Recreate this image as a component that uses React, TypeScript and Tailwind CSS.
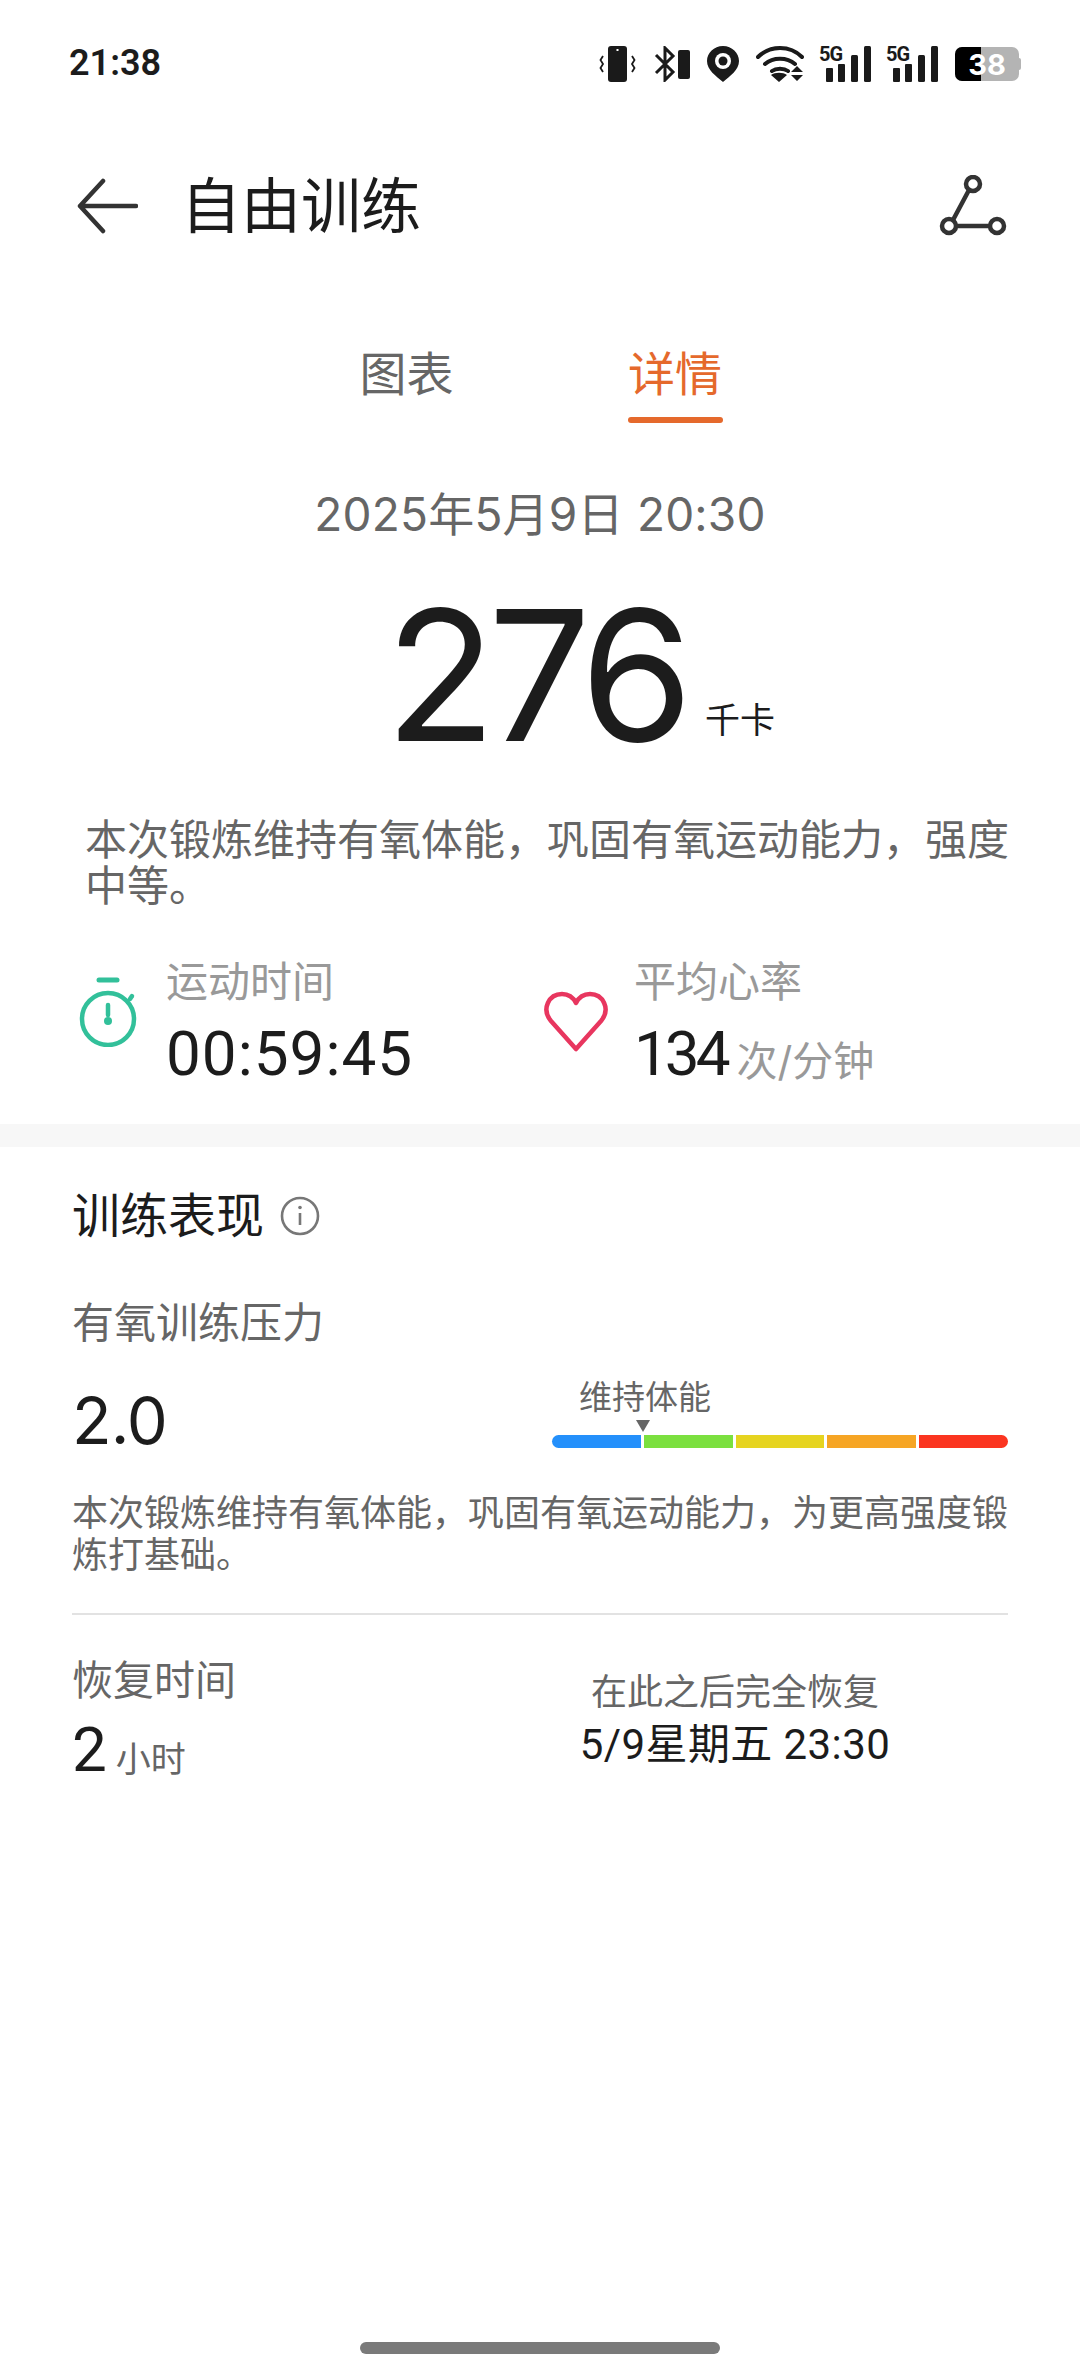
const FONT = "font-['Inter','Noto_Sans_CJK_SC',sans-serif]";
const NUM = "font-['Roboto','Noto_Sans_CJK_SC',sans-serif]";
const COMMA = "\uFF0C";

function SignalIcon() {
  return (
    <div className="relative h-[36px] w-[52px]">
      <span className="absolute left-0 top-[-2px] font-['Roboto'] text-[20px] font-bold leading-none tracking-[-1px] text-[#1a1a1a]">5G</span>
      <svg width="52" height="36" viewBox="0 0 52 36" className="absolute left-0 top-0">
        <rect x="7" y="22" width="7" height="14" rx="1" fill="#1a1a1a" />
        <rect x="19" y="18" width="7" height="18" rx="1" fill="#1a1a1a" />
        <rect x="32" y="9" width="7" height="27" rx="1.500" fill="#1a1a1a" />
        <rect x="45" y="0" width="7" height="36" rx="1.500" fill="#1a1a1a" />
      </svg>
    </div>
  );
}

function StatusIcons() {
  return (
    <div className="flex items-center">
      <svg width="37" height="36" viewBox="0 0 37 36" className="mr-[18px]">
        <rect x="9" y="0" width="19" height="36" rx="3" fill="#1a1a1a" />
        <rect x="17.500" y="3" width="2" height="2" fill="#fff" />
        <path d="M4 10l-2.500 4 2.500 4-2.500 4 2.500 4M33 10l2.500 4-2.500 4 2.500 4-2.500 4" fill="none" stroke="#1a1a1a" strokeWidth="1.800" />
      </svg>
      <svg width="37" height="36" viewBox="0 0 37 36" className="mr-[16px]">
        <path d="M2 9l17 17-8 8V2l8 8L2 27" fill="none" stroke="#1a1a1a" strokeWidth="3" />
        <rect x="24" y="4" width="12" height="29" rx="2" fill="#1a1a1a" />
      </svg>
      <svg width="32" height="36" viewBox="0 0 32 36" className="mr-[17px]">
        <path d="M16 0C7 0 0 7 0 15c0 9 9 15 16 21 7-6 16-12 16-21C32 7 25 0 16 0z" fill="#1a1a1a" />
        <circle cx="16" cy="15" r="8" fill="#fff" />
        <circle cx="16" cy="15" r="4.500" fill="#1a1a1a" />
      </svg>
      <svg width="48" height="36" viewBox="0 0 48 36" className="mr-[15px]">
        <path d="M2 11c12-12 32-12 44 0M9 18c8-7 22-7 30 0M16 25c4-3 12-3 16 0" fill="none" stroke="#1a1a1a" strokeWidth="4" strokeLinecap="round" />
        <path d="M23 36l-8-7c4-3 12-3 16 0zM41 20l6 6H35zM41 35l6-6H35z" fill="#1a1a1a" />
      </svg>
      <SignalIcon />
      <div className="w-[15px]" />
      <SignalIcon />
      <div className="relative ml-[17px] flex h-[34px] w-[64px] items-center justify-center overflow-hidden rounded-[7px] bg-[#b4b4b4]">
        <div className="absolute bottom-0 left-0 top-0 w-[26px] bg-black" />
        <span className="relative text-[29px] font-bold leading-none text-white">38</span>
      </div>
      <div className="h-[12px] w-[2px] rounded-r bg-[#b4b4b4]" />
    </div>
  );
}

function LoadBar() {
  const colors = ["bg-[#2490fb] rounded-l-full", "bg-[#7be03f]", "bg-[#e6d420]", "bg-[#f6a524]", "bg-[#fb3520] rounded-r-full"];
  return (
    <div className="flex h-[13px] w-[456px] gap-[3px]">
      {colors.map((c) => (
        <div key={c} className={`flex-1 ${c}`} />
      ))}
    </div>
  );
}

export default function App() {
  return (
    <div className={`flex h-[2376px] w-[1080px] flex-col bg-white ${FONT} text-[#1c1c1c]`}>
      {/* status bar */}
      <div className="flex h-[163px] items-start justify-between pl-[69px] pr-[59px] pt-[43px]">
        <span className={`${NUM} text-[36px] font-semibold leading-[40px]`}>21:38</span>
        <div className="pt-[3px]">
          <StatusIcons />
        </div>
      </div>

      {/* title row */}
      <div className="flex h-[84px] items-center justify-between pl-[76px] pr-[73px] pt-[2px]">
        <div className="flex items-center">
          <svg width="62" height="56" viewBox="0 0 62 56" className="mr-[43px]">
            <path d="M27 3L4 28l23 25M4 28h56" fill="none" stroke="#333" strokeWidth="4.5" strokeLinecap="round" strokeLinejoin="round" />
          </svg>
          <span className="text-[60px] leading-[70px]">自由训练</span>
        </div>
        <svg width="68" height="62" viewBox="0 0 68 62">
          <g fill="none" stroke="#333" strokeWidth="4.5">
            <circle cx="34" cy="9" r="7" />
            <circle cx="10" cy="51" r="7" />
            <circle cx="58" cy="51" r="7" />
            <path d="M30 15L14 45M17 51h34" />
          </g>
        </svg>
      </div>

      {/* tabs */}
      <div className="mt-[97px] flex h-[86px] items-start justify-center gap-[174px] pl-[2px]">
        <span className="text-[47px] leading-[60px] text-[#666]">图表</span>
        <div className="flex flex-col items-center">
          <span className="text-[47px] leading-[60px] text-[#e5692c]">详情</span>
          <div className="mt-[13px] h-[6px] w-[95px] rounded-full bg-[#e5692c]" />
        </div>
      </div>

      {/* summary */}
      <div className="mt-[54px] text-center text-[46px] leading-[60px] tracking-[0.2px] text-[#666]">2025年5月9日 20:30</div>
      <div className="mt-[36px] flex h-[190px] items-end justify-center pl-[80px]">
        <span className="text-[182px] leading-[190px] tracking-[-8px]">276</span>
        <span className="mb-[28px] ml-[20px] text-[35px] leading-[44px]">千卡</span>
      </div>
      <p className="mt-[47px] pl-[85px] pr-[70px] text-[42px] leading-[46px] text-[#666]">
        本次锻炼维持有氧体能{COMMA}巩固有氧运动能力{COMMA}强度中等。
      </p>

      {/* stats */}
      <div className="mt-[44px] flex h-[146px] pl-[78px]">
        <div className="flex w-[462px]">
          <svg width="60" height="70" viewBox="0 0 60 70" className="mr-[28px] mt-[24px]">
            <g fill="none" stroke="#32c09a" strokeWidth="4.5" strokeLinecap="round">
              <path d="M21 3h18" strokeWidth="5" />
              <circle cx="30" cy="42" r="26" />
              <path d="M30 28v10" />
              <path d="M52 22l2-3" />
            </g>
            <circle cx="30" cy="44" r="4" fill="#32c09a" />
          </svg>
          <div>
            <div className="text-[42px] leading-[58px] text-[#999]">运动时间</div>
            <div className={`${NUM} mt-[6px] text-[62px] leading-[74px] tracking-[1px]`}>00:59:45</div>
          </div>
        </div>
        <div className="flex">
          <svg width="68" height="62" viewBox="0 0 68 62" className="ml-[2px] mr-[24px] mt-[38px]">
            <path d="M34 58L9 30C-1 18 7 3 20 3c6 0 11 3 14 9 3-6 8-9 14-9 13 0 21 15 11 27z" fill="none" stroke="#e8365f" strokeWidth="4.5" strokeLinejoin="round" />
          </svg>
          <div>
            <div className="text-[42px] leading-[58px] text-[#999]">平均心率</div>
            <div className="mt-[6px] flex items-end">
              <span className={`${NUM} text-[62px] leading-[74px] tracking-[-4px]`}>134</span>
              <span className="mb-[4px] ml-[10px] text-[41px] leading-[52px] text-[#999]">次/分钟</span>
            </div>
          </div>
        </div>
      </div>

      <div className="mt-[25px] h-[23px] bg-[#f7f7f7]" />

      {/* performance */}
      <div className="px-[72px]">
        <div className="mt-[37px] flex items-center">
          <span className="text-[48px] leading-[64px]">训练表现</span>
          <svg width="40" height="40" viewBox="0 0 40 40" className="ml-[16px]">
            <circle cx="20" cy="20" r="18" fill="none" stroke="#777" strokeWidth="2.6" />
            <path d="M20 17v12" stroke="#777" strokeWidth="2.6" />
            <circle cx="20" cy="11.5" r="1.8" fill="#777" />
          </svg>
        </div>
        <div className="mt-[47px] text-[42px] leading-[56px] text-[#666]">有氧训练压力</div>
        <div className="mt-[24px] flex items-start justify-between">
          <span className="pt-[6px] text-[65px] leading-[80px] tracking-[-1px]">2.0</span>
          <div className="w-[456px]">
            <div className="pl-[27px] text-[33px] leading-[44px] text-[#666]">维持体能</div>
            <div className="ml-[84px] mt-[1px] h-0 w-0 border-x-[7px] border-t-[12px] border-x-transparent border-t-[#666]" />
            <div className="mt-[3px]">
              <LoadBar />
            </div>
          </div>
        </div>
        <p className="-mr-[4px] mt-[31px] text-[36px] leading-[42px] text-[#666]">
          本次锻炼维持有氧体能{COMMA}巩固有氧运动能力{COMMA}为更高强度锻炼打基础。
        </p>
        <div className="mt-[37px] h-[2px] bg-[#e2e2e2]" />
        <div className="mt-[36px] flex">
          <div className="w-[490px]">
            <div className="text-[41px] leading-[58px] text-[#666]">恢复时间</div>
            <div className="mt-[4px] flex items-end">
              <span className={`${NUM} text-[62px] leading-[74px]`}>2</span>
              <span className="mb-[5px] ml-[9px] text-[35px] leading-[46px] text-[#666]">小时</span>
            </div>
          </div>
          <div className="w-[346px] text-center">
            <div className="pt-[16px] text-[36px] leading-[50px] text-[#666]">在此之后完全恢复</div>
            <div className={`${NUM} mt-[0px] text-[42px] leading-[56px] tracking-[0.4px]`}>5/9星期五 23:30</div>
          </div>
        </div>
      </div>

      {/* home indicator */}
      <div className="mt-auto flex justify-center pb-[22px]">
        <div className="h-[12px] w-[360px] rounded-full bg-[#7a7a7a]" />
      </div>
    </div>
  );
}
